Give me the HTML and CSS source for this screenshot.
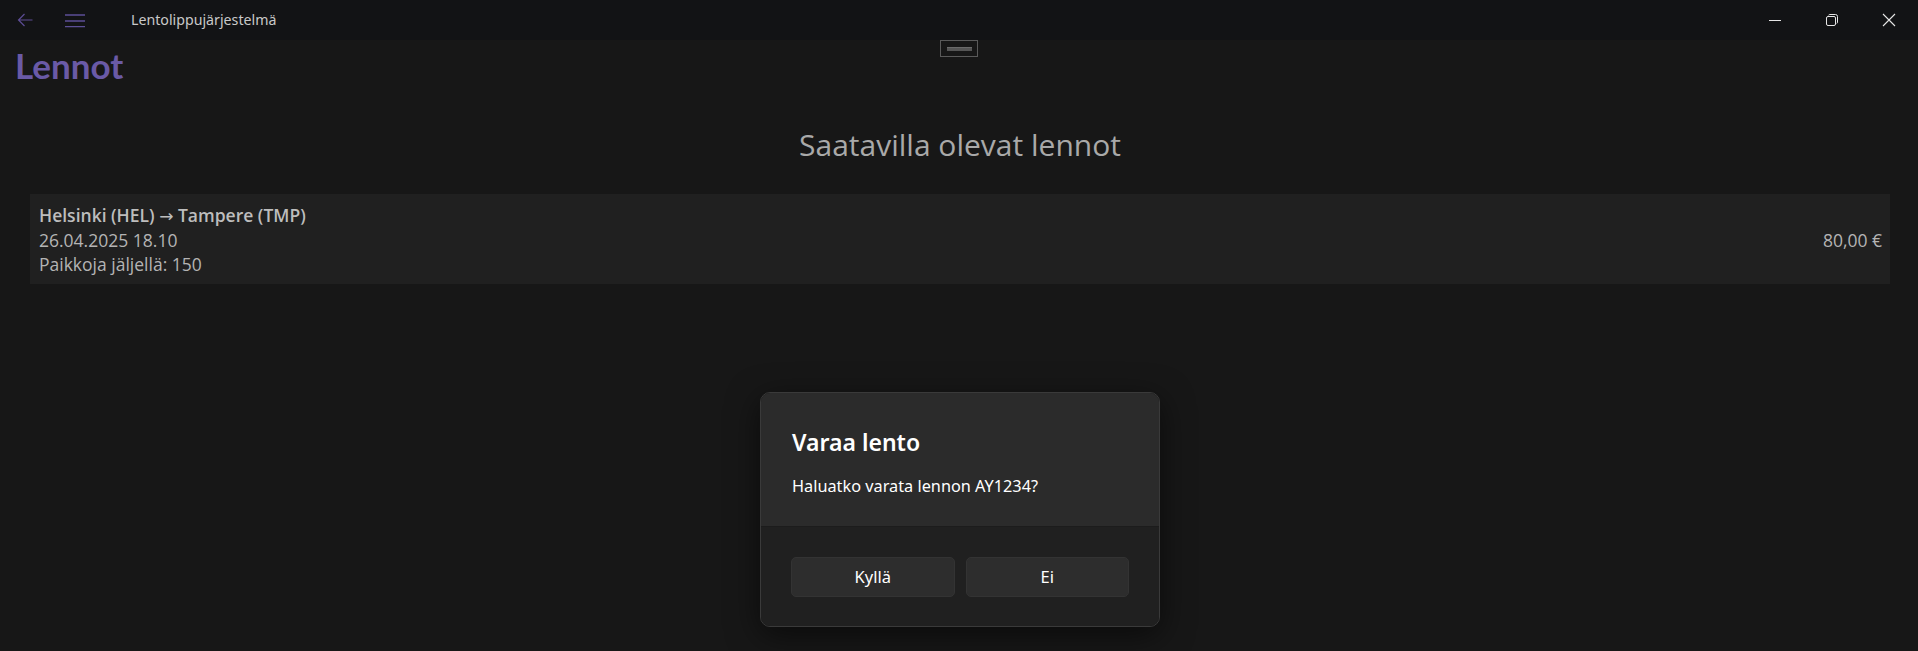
FILE: index.html
```html
<!DOCTYPE html>
<html lang="fi">
<head>
<meta charset="utf-8">
<title>Lentolippujärjestelmä</title>
<link rel="stylesheet" href="styles.css">
</head>
<body>
<div class="window">
  <header class="titlebar">
    <div class="nav-btn back">
      <svg width="16" height="14" viewBox="0 0 16 14"><path d="M15.5 7H1.5M7.5 1L1.5 7L7.5 13" fill="none" stroke="#5c4c94" stroke-width="1.2"/></svg>
    </div>
    <div class="nav-btn menu">
      <svg width="20" height="14" viewBox="0 0 20 14"><path d="M0 1H20M0 7H20M0 12.6H20" fill="none" stroke="#5c4f96" stroke-width="1.3"/></svg>
    </div>
    <div class="app-title">Lentolippujärjestelmä</div>
    <div class="spacer"></div>
    <div class="win-btn">
      <svg width="14" height="14" viewBox="0 0 14 14"><path d="M1 7.5H13" stroke="#e6e6e6" stroke-width="1"/></svg>
    </div>
    <div class="win-btn">
      <svg width="14" height="14" viewBox="0 0 14 14"><rect x="1.5" y="3.5" width="9" height="9" rx="1.5" fill="none" stroke="#e6e6e6" stroke-width="1"/><path d="M3.5 2.2Q4 1.5 5 1.5H10.5Q12.5 1.5 12.5 3.5V9Q12.5 10 11.8 10.5" fill="none" stroke="#e6e6e6" stroke-width="1"/></svg>
    </div>
    <div class="win-btn">
      <svg width="14" height="14" viewBox="0 0 14 14"><path d="M1 1L13 13M13 1L1 13" stroke="#e6e6e6" stroke-width="1.1"/></svg>
    </div>
  </header>
  <main class="content">
    <div class="grip"><span></span></div>
    <h1 class="page-title">Lennot</h1>
    <h2 class="section-title">Saatavilla olevat lennot</h2>
    <div class="flight-list">
      <div class="flight">
        <div class="flight-info">
          <div class="route">Helsinki (HEL) <span class="arrow">→</span> Tampere (TMP)</div>
          <div class="line">26.04.2025 18.10</div>
          <div class="line">Paikkoja jäljellä: 150</div>
        </div>
        <div class="price">80,00 €</div>
      </div>
    </div>
  </main>
  <div class="dialog">
    <div class="dialog-body">
      <div class="dialog-title">Varaa lento</div>
      <div class="dialog-text">Haluatko varata lennon AY1234?</div>
    </div>
    <div class="dialog-footer">
      <button class="btn">Kyllä</button>
      <button class="btn">Ei</button>
    </div>
  </div>
</div>
</body>
</html>
```
FILE: styles.css
```css
* { box-sizing: border-box; }
html, body { margin: 0; padding: 0; }
body {
  background: #171717;
  width: 1918px;
  height: 651px;
  overflow: hidden;
  font-family: "Open Sans", "Noto Sans", sans-serif;
}
.window { position: relative; width: 1918px; height: 651px; }

.titlebar {
  height: 40px;
  background: #121315;
  display: flex;
  align-items: center;
}
.nav-btn { display: flex; align-items: center; }
.nav-btn.back { margin-left: 17px; width: 16px; }
.nav-btn.menu { margin-left: 32px; width: 20px; padding-top: 1px; }
.app-title {
  margin-left: 46px;
  color: #c9c9c9;
  font-family: "Noto Sans", "Open Sans", sans-serif;
  font-size: 14.2px;
  padding-bottom: 1px;
}
.spacer { flex: 1; }
.win-btn {
  width: 57px;
  height: 40px;
  display: flex;
  align-items: center;
  justify-content: center;
}
.win-btn:last-child { width: 58px; }

.content { position: relative; padding: 0 28px 0 30px; }
.grip {
  position: absolute;
  left: 940px;
  top: 0;
  width: 38px;
  height: 17px;
  border: 1px solid #5a5a5a;
  display: flex;
  align-items: center;
  justify-content: center;
}
.grip span { display: block; width: 25px; height: 4px; background: #555; border-top: 1px solid #6a6a6a; }

.page-title {
  margin: 0 0 0 -15px;
  font-family: "Lato", "Noto Sans", sans-serif;
  font-weight: 700;
  font-size: 35px;
  line-height: 50px;
  color: #6a5aa6;
}
.section-title {
  margin: 35px 0 0;
  text-align: center;
  font-weight: 400;
  font-size: 30px;
  line-height: 40px;
  color: #a9a9a9;
}
.flight-list { margin-top: 29px; }
.flight {
  background: #202020;
  height: 90px;
  display: flex;
  align-items: center;
  justify-content: space-between;
  padding: 0 8px 0 9px;
  color: #b4b4b4;
  font-size: 17.5px;
}
.flight-info { line-height: 24px; padding-top: 1px; }
.route { font-weight: 600; color: #bdbdbd; }
.arrow { font-family: "DejaVu Sans", sans-serif; font-weight: 400; font-size: 17px; }
.price { padding-top: 1px; }

.dialog {
  position: absolute;
  left: 760px;
  top: 392px;
  width: 400px;
  height: 235px;
  border-radius: 10px;
  border: 1px solid #3a3a3a;
  overflow: hidden;
  box-shadow: 0 8px 32px rgba(0,0,0,0.55);
  display: flex;
  flex-direction: column;
  font-family: "Noto Sans", "Open Sans", sans-serif;
  color: #ffffff;
}
.dialog-body {
  background: #2b2b2b;
  height: 133px;
  padding: 33px 30px 0 31px;
}
.dialog-title { font-size: 23px; font-weight: 600; line-height: 32px; }
.dialog-text { margin-top: 16px; font-size: 16.3px; line-height: 24px; }
.dialog-footer {
  flex: 1;
  background: #202020;
  border-top: 1px solid #1c1c1c;
  display: flex;
  gap: 11px;
  padding: 30px 30px 0 30px;
}
.btn {
  flex: 1;
  height: 40px;
  border: 1px solid #333;
  border-radius: 5px;
  background: #2d2d2d;
  color: #ffffff;
  font-family: "Noto Sans", "Open Sans", sans-serif;
  font-size: 16.5px;
  padding: 0 0 2px;
}
```
